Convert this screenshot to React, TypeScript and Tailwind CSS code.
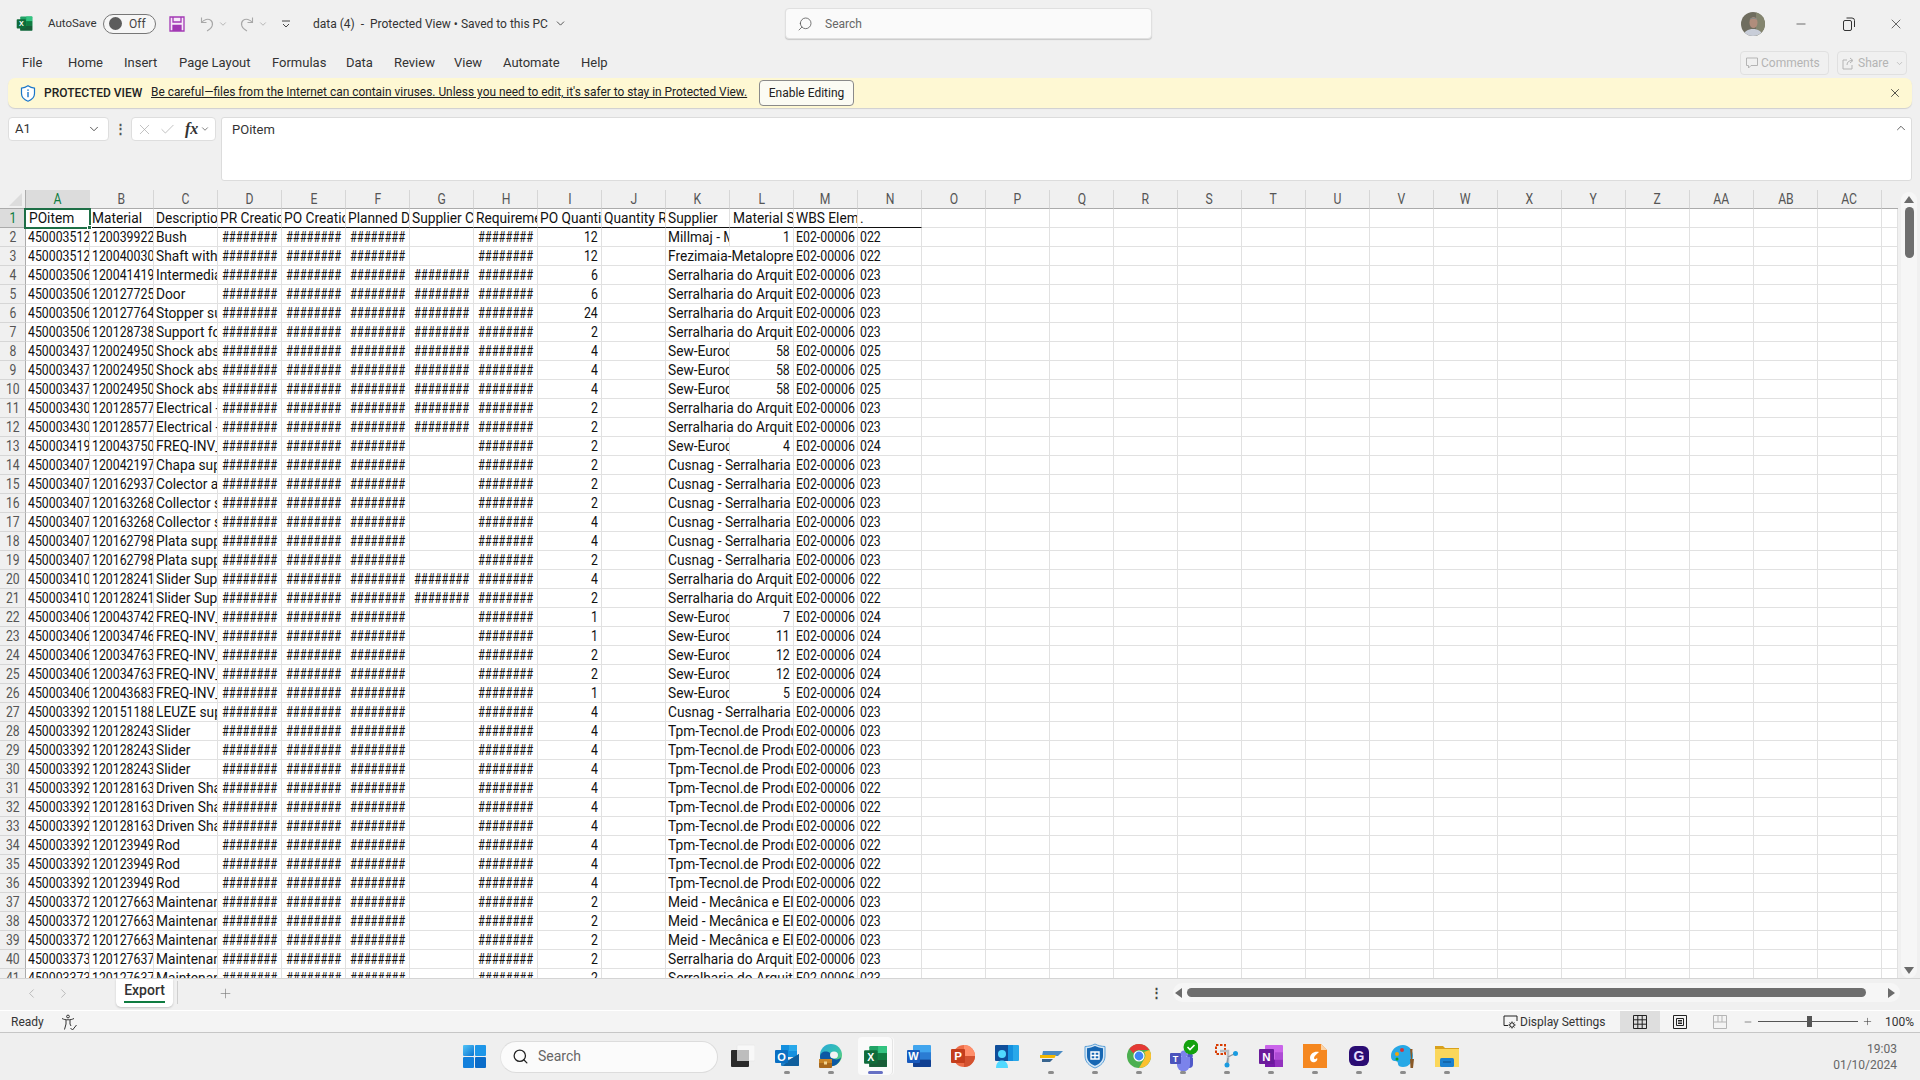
import React from 'react';
import { ChevronDown, ChevronUp, ChevronLeft, ChevronRight, Minus, Plus, Search, X, Check } from 'lucide-react';

const uiFont = "font-['Roboto','Noto_Sans',sans-serif]";
const cellFont = "font-['Roboto',sans-serif]";

const COLUMNS = ['A', 'B', 'C', 'D', 'E', 'F', 'G', 'H', 'I', 'J', 'K', 'L', 'M', 'N', 'O', 'P', 'Q', 'R', 'S', 'T', 'U', 'V', 'W', 'X', 'Y', 'Z', 'AA', 'AB', 'AC'];

const TABS = [
    { label: 'File', width: 'w-[46px]' },
    { label: 'Home', width: 'w-[56px]' },
    { label: 'Insert', width: 'w-[55px]' },
    { label: 'Page Layout', width: 'w-[93px]' },
    { label: 'Formulas', width: 'w-[74px]' },
    { label: 'Data', width: 'w-[48px]' },
    { label: 'Review', width: 'w-[60px]' },
    { label: 'View', width: 'w-[49px]' },
    { label: 'Automate', width: 'w-[78px]' },
    { label: 'Help', width: 'w-[40px]' },
];

const HEADERS = ['POitem', 'Material', 'Description', 'PR Creation Date', 'PO Creation Date', 'Planned Date', 'Supplier Conf', 'Requirement', 'PO Quantity', 'Quantity Rec', 'Supplier', 'Material Sup', 'WBS Element', '.'];

const SERRA = 'Serralharia do Arquitecto';
const SEW = 'Sew-Eurodrive';
const CUSNAG = 'Cusnag - Serralharia Civil';
const TPM = 'Tpm-Tecnol.de Produção';
const MEID = 'Meid - Mecânica e Eletricidade';

type Row = [string, string, string, boolean, number, string, number | null, string];

const ROWS: Row[] = [
    ['4500035120', '1200399220', 'Bush', false, 12, 'Millmaj - Mecânica', 1, '022'],
    ['4500035120', '1200400300', 'Shaft with  bushing', false, 12, 'Frezimaia-Metalopress', null, '022'],
    ['4500035060', '1200414190', 'Intermediate', true, 6, SERRA, null, '023'],
    ['4500035060', '1201277250', 'Door', true, 6, SERRA, null, '023'],
    ['4500035060', '1201277640', 'Stopper support', true, 24, SERRA, null, '023'],
    ['4500035060', '1201287380', 'Support for', true, 2, SERRA, null, '023'],
    ['4500034370', '1200249500', 'Shock absorber', true, 4, SEW, 58, '025'],
    ['4500034370', '1200249500', 'Shock absorber', true, 4, SEW, 58, '025'],
    ['4500034370', '1200249500', 'Shock absorber', true, 4, SEW, 58, '025'],
    ['4500034300', '1201285770', 'Electrical -cable', true, 2, SERRA, null, '023'],
    ['4500034300', '1201285770', 'Electrical -cable', true, 2, SERRA, null, '023'],
    ['4500034190', '1200437500', 'FREQ-INV_ABB', false, 2, SEW, 4, '024'],
    ['4500034070', '1200421970', 'Chapa suporte', false, 2, CUSNAG, null, '023'],
    ['4500034070', '1201629370', 'Colector ar', false, 2, CUSNAG, null, '023'],
    ['4500034070', '1201632680', 'Collector sup', false, 2, CUSNAG, null, '023'],
    ['4500034070', '1201632680', 'Collector sup', false, 4, CUSNAG, null, '023'],
    ['4500034070', '1201627980', 'Plata support', false, 4, CUSNAG, null, '023'],
    ['4500034070', '1201627980', 'Plata support', false, 2, CUSNAG, null, '023'],
    ['4500034100', '1201282410', 'Slider Support', true, 4, SERRA, null, '022'],
    ['4500034100', '1201282410', 'Slider Support', true, 2, SERRA, null, '022'],
    ['4500034060', '1200437420', 'FREQ-INV_ABB', false, 1, SEW, 7, '024'],
    ['4500034060', '1200347460', 'FREQ-INV_ABB', false, 1, SEW, 11, '024'],
    ['4500034060', '1200347630', 'FREQ-INV_ABB', false, 2, SEW, 12, '024'],
    ['4500034060', '1200347630', 'FREQ-INV_ABB', false, 2, SEW, 12, '024'],
    ['4500034060', '1200436830', 'FREQ-INV_ABB', false, 1, SEW, 5, '024'],
    ['4500033920', '1201511880', 'LEUZE support', false, 4, CUSNAG, null, '023'],
    ['4500033920', '1201282430', 'Slider', false, 4, TPM, null, '023'],
    ['4500033920', '1201282430', 'Slider', false, 4, TPM, null, '023'],
    ['4500033920', '1201282430', 'Slider', false, 4, TPM, null, '023'],
    ['4500033920', '1201281630', 'Driven Shaft', false, 4, TPM, null, '022'],
    ['4500033920', '1201281630', 'Driven Shaft', false, 4, TPM, null, '022'],
    ['4500033920', '1201281630', 'Driven Shaft', false, 4, TPM, null, '022'],
    ['4500033920', '1201239490', 'Rod', false, 4, TPM, null, '022'],
    ['4500033920', '1201239490', 'Rod', false, 4, TPM, null, '022'],
    ['4500033920', '1201239490', 'Rod', false, 4, TPM, null, '022'],
    ['4500033720', '1201276630', 'Maintenance', false, 2, MEID, null, '023'],
    ['4500033720', '1201276630', 'Maintenance', false, 2, MEID, null, '023'],
    ['4500033720', '1201276630', 'Maintenance', false, 2, MEID, null, '023'],
    ['4500033730', '1201276370', 'Maintenance', false, 2, SERRA, null, '023'],
    ['4500033730', '1201276370', 'Maintenance', false, 2, SERRA, null, '023'],
];

const HASH = '########';
const cellBorder = 'border-r border-b border-[#e1e1e1] p-0';
const cellInner = 'h-[18px] leading-[18px] overflow-hidden whitespace-nowrap text-[14px] text-[#111]';
// Roboto squeezed to the width of the sheet's narrow font: digits a bit more than letters
const wordLeft = 'inline-block origin-left scale-x-[0.98]';
const digitLeft = 'inline-block origin-left scale-x-[0.88]';
const digitRight = 'inline-block origin-right scale-x-[0.88]';
const narrowCenter = 'inline-block origin-center scale-x-[0.87]';
const hashCenter = 'inline-block origin-center scale-x-[0.8] shrink-0';

const TextCell = ({ value, colSpan, digits }: { value?: string; colSpan?: number; digits?: boolean }) => (
    <td colSpan={colSpan} className={cellBorder}>
        <div className={`${cellInner} pl-[2px]`}>
            <span className={digits ? digitLeft : wordLeft}>{value}</span>
        </div>
    </td>
);

const HashCell = ({ show = true }: { show?: boolean }) => (
    <td className={cellBorder}>
        <div className={`${cellInner} flex justify-center`}>
            {show && <span className={hashCenter}>{HASH}</span>}
        </div>
    </td>
);

const NumCell = ({ value }: { value: number }) => (
    <td className={cellBorder}>
        <div className={`${cellInner} text-right pr-[3px]`}>
            <span className={digitRight}>{value}</span>
        </div>
    </td>
);

const ExcelMark = ({ size }: { size: number }) => (
    <svg width={size} height={size} viewBox="0 0 24 24">
        <rect x="6" y="2" width="17" height="20" rx="1.2" fill="#21a366" />
        <rect x="14.5" y="2" width="8.5" height="6.7" fill="#33c481" />
        <rect x="14.5" y="8.7" width="8.5" height="6.6" fill="#107c41" />
        <rect x="6" y="15.3" width="17" height="6.7" fill="#185c37" />
        <rect x="6" y="8.7" width="8.5" height="6.6" fill="#107c41" />
        <rect x="1" y="6" width="13" height="13" rx="1" fill="#0f6b3a" />
        <text x="7.5" y="16" textAnchor="middle" fontSize="10" fontWeight="700" fill="#fff" fontFamily="Liberation Sans, sans-serif">X</text>
    </svg>
);

const SaveIcon = () => (
    <svg width="16" height="16" viewBox="0 0 16 16" fill="none" stroke="#a238b4" strokeWidth="1.3">
        <path d="M1 1h14v14H1z" fill="#f6e9f8" />
        <path d="M4 1v5h8V1" />
        <path d="M4 15V9.5h8V15" fill="#a238b4" stroke="none" />
        <path d="M4 15V9.5h8V15" />
    </svg>
);

const UndoIcon = ({ flip }: { flip?: boolean }) => (
    <svg width="16" height="16" viewBox="0 0 16 16" fill="none" stroke="#a8a8a8" strokeWidth="1.1" className={flip ? '-scale-x-100' : ''}>
        <path d="M2.5 1.5v5h5" />
        <path d="M2.5 6.5C5 3.5 9 2 12 4.500c3 3 1.500 8-4 10.500" />
    </svg>
);

const RestoreIcon = () => (
    <svg width="12" height="14" viewBox="0 0 12 14" fill="none" stroke="#333" strokeWidth="1">
        <rect x=".5" y="3.500" width="8" height="10" rx="1.500" />
        <path d="M3.500 1h5.500a2.500 2.500 0 0 1 2.500 2.500v6.500" />
    </svg>
);

const ShieldIcon = () => (
    <svg width="16" height="17" viewBox="0 0 16 17" fill="none">
        <path d="M8 .8c2 1.400 4 2.200 6.500 2.400v5.300c0 3.500-2.700 6.300-6.500 7.700-3.800-1.400-6.500-4.200-6.500-7.700V3.200C4 3 6 2.200 8 .8z" fill="#fff" stroke="#1a76c9" strokeWidth="1.2" />
        <rect x="7.300" y="7" width="1.400" height="5.200" fill="#1a76c9" />
        <rect x="7.300" y="4.400" width="1.400" height="1.500" fill="#1a76c9" />
    </svg>
);

const Avatar = () => (
    <svg width="24" height="24" viewBox="0 0 24 24">
        <defs>
            <clipPath id="avatar-clip">
                <circle cx="12" cy="12" r="12" />
            </clipPath>
        </defs>
        <g clipPath="url(#avatar-clip)">
            <rect width="24" height="24" fill="#6f6d5f" />
            <rect x="15" width="9" height="24" fill="#84856f" />
            <path d="M3 24c0-5 4-7 9-7s9 2 9 7z" fill="#c8cdd8" />
            <ellipse cx="12.500" cy="10.500" rx="4" ry="5.500" fill="#b08d7c" />
            <path d="M8.500 8c1-3.500 7-3.500 8 0-2-1.200-6-1.200-8 0z" fill="#8a8a86" />
        </g>
    </svg>
);

const DisplayIcon = () => (
    <svg width="15" height="14" viewBox="0 0 15 14" fill="none" stroke="#222" strokeWidth="1">
        <path d="M5 10.500H1V1h13v5" />
        <circle cx="9" cy="10" r="2.200" />
        <path d="M9 6.500v1.300M9 12.200v1.300M5.500 10h1.300M11.200 10h1.300M6.600 7.600l.9.9M10.500 11.500l.9.9M11.400 7.600l-.9.9M7.500 11.500l-.9.9" />
    </svg>
);

const AccessIcon = () => (
    <svg width="17" height="17" viewBox="0 0 17 17" fill="none" stroke="#333" strokeWidth="1">
        <circle cx="7" cy="2.500" r="1.400" />
        <path d="M1 4.500c2 1 3.500 1.300 6 1.300s4-.3 6-1.300" />
        <path d="M5 6v4l-1.500 5.500M9 6v4l1 2" />
        <path d="M9.500 14l2 2 4-5" stroke="#333" />
    </svg>
);

const NormalViewIcon = () => (
    <svg width="14" height="14" viewBox="0 0 14 14" fill="none" stroke="#222" strokeWidth="1">
        <path d="M.5.500h13v13H.5zM.5 4.800h13M.5 9.200h13M4.800.500v13M9.200.500v13" />
    </svg>
);

const PageViewIcon = () => (
    <svg width="14" height="14" viewBox="0 0 14 14" fill="none" stroke="#222" strokeWidth="1">
        <path d="M.5.500h13v13H.5zM3.500 3.500h7v7h-7zM5 5.500h4M5 7h4M5 8.500h4" />
    </svg>
);

const BreakViewIcon = () => (
    <svg width="14" height="14" viewBox="0 0 14 14" fill="none" stroke="#b5b5b5" strokeWidth="1">
        <path d="M.5.500h13v13H.5zM.5 7h13M5 .500V7M9 .500V7" />
    </svg>
);

const WindowsLogo = () => (
    <svg width="23" height="23" viewBox="0 0 23 23">
        <defs>
            <linearGradient id="win-a" x1="0" y1="0" x2="1" y2="1">
                <stop offset="0" stopColor="#52c5f8" />
                <stop offset="1" stopColor="#0b74d1" />
            </linearGradient>
        </defs>
        <rect x="0" y="0" width="11" height="11" rx="1" fill="url(#win-a)" />
        <rect x="12" y="0" width="11" height="11" rx="1" fill="#1e96e8" />
        <rect x="0" y="12" width="11" height="11" rx="1" fill="#1380dc" />
        <rect x="12" y="12" width="11" height="11" rx="1" fill="#0a6cc9" />
    </svg>
);

const OfficeTile = ({ letter, tile, parts }: { letter: string; tile: string; parts: string[] }) => (
    <svg width="24" height="24" viewBox="0 0 24 24">
        <rect x="6" y="1" width="18" height="22" rx="1" fill={parts[0]} />
        <rect x="6" y="8.300" width="18" height="7.300" fill={parts[1]} />
        <rect x="6" y="15.600" width="18" height="7.400" rx="1" fill={parts[2]} />
        <rect x="0" y="6" width="13" height="13" rx="1" fill={tile} />
        <text x="6.500" y="16.200" textAnchor="middle" fontSize="11" fontWeight="700" fill="#fff" fontFamily="Liberation Sans, sans-serif">{letter}</text>
    </svg>
);

const TaskView = () => (
    <svg width="24" height="24" viewBox="0 0 24 24">
        <rect x="6" y="1" width="18" height="16" rx="1" fill="#f8f8f8" stroke="#e2e2e2" strokeWidth=".5" />
        <rect x="0" y="6" width="18" height="17" rx="1" fill="#2a2a2a" />
        <rect x="6" y="6" width="12" height="11" fill="#bdbdbd" />
    </svg>
);

const Outlook = () => (
    <svg width="24" height="24" viewBox="0 0 24 24">
        <rect x="6" y="1" width="16" height="12" fill="#1490df" />
        <rect x="14" y="1" width="8" height="6" fill="#28a8ea" />
        <path d="M6 11l8 5 10-6v11a1 1 0 0 1-1 1H7a1 1 0 0 1-1-1z" fill="#1b7dc7" />
        <path d="M14 16l10-6v11a1 1 0 0 1-1 1H8z" fill="#0f5e9c" />
        <rect x="0" y="6" width="13" height="13" rx="1" fill="#0a6fc2" />
        <text x="6.500" y="16.500" textAnchor="middle" fontSize="11" fontWeight="700" fill="#fff" fontFamily="Liberation Sans, sans-serif">O</text>
    </svg>
);

const EdgeWork = () => (
    <svg width="24" height="24" viewBox="0 0 24 24">
        <defs>
            <linearGradient id="edge-a" x1="0" y1="0" x2="1" y2="1">
                <stop offset="0" stopColor="#2aa8d8" />
                <stop offset=".55" stopColor="#35c1b0" />
                <stop offset="1" stopColor="#7bd65a" />
            </linearGradient>
        </defs>
        <circle cx="12" cy="11" r="11" fill="url(#edge-a)" />
        <path d="M1 13C1 8 7 6 11 9c3 2 1 5 4 6 3 1 6 0 7-2-1 6-6 10-11 9-6-1-10-4-10-9z" fill="#0c59a4" />
        <ellipse cx="15" cy="11" rx="4" ry="3.500" fill="#f3f3f3" />
        <rect x="0" y="15" width="13" height="9" rx="1" fill="#a8681c" />
        <rect x="0" y="15" width="13" height="4" fill="#c98528" />
        <rect x="5" y="17.500" width="3" height="3" fill="#f4d58f" />
    </svg>
);

const Powerpoint = () => (
    <svg width="24" height="24" viewBox="0 0 24 24">
        <circle cx="13" cy="12" r="11" fill="#ed6c47" />
        <path d="M13 1a11 11 0 0 1 11 11H13z" fill="#ff8f6b" />
        <path d="M13 12h11a11 11 0 0 1-11 11z" fill="#d35230" />
        <rect x="0" y="5" width="14" height="14" rx="1" fill="#c43e1c" />
        <text x="7" y="16.200" textAnchor="middle" fontSize="11.500" fontWeight="700" fill="#fff" fontFamily="Liberation Sans, sans-serif">P</text>
    </svg>
);

const People = () => (
    <svg width="24" height="24" viewBox="0 0 24 24">
        <rect x="0" y="1" width="16" height="16" rx="1" fill="#0f4e9a" />
        <rect x="13" y="1" width="11" height="16" rx="1" fill="#28a8ea" />
        <rect x="13" y="1" width="5" height="16" fill="#1490df" />
        <circle cx="7" cy="10" r="4" fill="#50d9ff" />
        <path d="M1 24c0-5 2.500-7.500 6-7.500s6 2.500 6 7.500z" fill="#50d9ff" />
    </svg>
);

const Wedge = () => (
    <svg width="24" height="24" viewBox="0 0 24 24">
        <path d="M4 7h20l-5 5H3z" fill="#4b8bc4" />
        <path d="M1 11h16l-1.500 3H1z" fill="#f5b800" />
        <path d="M3 15h11l-3 3H3z" fill="#38658f" />
    </svg>
);

const ShieldApp = () => (
    <svg width="24" height="26" viewBox="0 0 24 26">
        <path d="M12 1c3 1.600 6.500 2.400 10 2.500V13c0 6-4.500 10-10 12C6.500 23 2 19 2 13V3.500C5.500 3.400 9 2.600 12 1z" fill="#d4e6f5" stroke="#5aa0d8" strokeWidth="1" />
        <path d="M12 3c2.500 1.300 5.500 2 8 2.200V13c0 4.800-3.600 8-8 9.800C7.600 21 4 17.800 4 13V5.200C6.500 5 9.500 4.300 12 3z" fill="#1767b3" />
        <path d="M8 9h8v7H8zM8 12.500h8M12 9v7" fill="none" stroke="#fff" strokeWidth="1.400" />
    </svg>
);

const Chrome = () => (
    <svg width="24" height="24" viewBox="0 0 24 24">
        <circle cx="12" cy="12" r="12" fill="#4caf50" />
        <path d="M12 0a12 12 0 0 1 10.400 6H12a6 6 0 0 0-5.500 3.600L2.400 4.800A12 12 0 0 1 12 0z" fill="#e53935" />
        <path d="M22.400 6A12 12 0 0 1 12 24l5.200-9A6 6 0 0 0 17 8z" fill="#fbc02d" />
        <circle cx="12" cy="12" r="5.600" fill="#fff" />
        <circle cx="12" cy="12" r="4.400" fill="#3f86f5" />
    </svg>
);

const Teams = () => (
    <svg width="30" height="32" viewBox="0 0 30 32">
        <circle cx="16" cy="14" r="3.500" fill="#7b83eb" />
        <circle cx="22" cy="16" r="2.800" fill="#5059c9" />
        <path d="M17 18h8v6a4 4 0 0 1-8 0z" fill="#5059c9" />
        <path d="M9 17h13v8a6 6 0 0 1-13 0z" fill="#7b83eb" />
        <rect x="2" y="13" width="11" height="11" rx="1" fill="#4b53bc" />
        <text x="7.500" y="22" textAnchor="middle" fontSize="9" fontWeight="700" fill="#fff" fontFamily="Liberation Sans, sans-serif">T</text>
        <circle cx="23" cy="7" r="7.500" fill="#13a10e" />
        <path d="M19.500 7l2.500 2.500 4.500-4.500" fill="none" stroke="#fff" strokeWidth="1.600" />
    </svg>
);

const Snip = () => (
    <svg width="24" height="24" viewBox="0 0 24 24">
        <rect x="1" y="1" width="9" height="9" fill="none" stroke="#d83b01" strokeWidth="2" strokeDasharray="2.500 1.500" />
        <path d="M5 7h8v12" fill="none" stroke="#b8bdc3" strokeWidth="2.500" />
        <path d="M13 13l6-3M13 14l-1 5" stroke="#8f969c" strokeWidth="1.300" />
        <circle cx="20.500" cy="9.500" r="2.500" fill="#1a9be0" />
        <circle cx="12" cy="21" r="2.500" fill="#1a9be0" />
    </svg>
);

const OneNote = () => (
    <svg width="24" height="24" viewBox="0 0 24 24">
        <rect x="6" y="1" width="18" height="22" rx="1" fill="#ca64ea" />
        <rect x="16" y="8.300" width="8" height="7.300" fill="#ae4bd5" />
        <rect x="16" y="15.600" width="8" height="7.400" fill="#9332bf" />
        <rect x="6" y="15.600" width="10" height="7.400" fill="#7719aa" />
        <rect x="0" y="5" width="15" height="15" rx="1" fill="#6a1b9a" />
        <text x="7.500" y="16.800" textAnchor="middle" fontSize="11.500" fontWeight="700" fill="#fff" fontFamily="Liberation Sans, sans-serif">N</text>
    </svg>
);

const Foxit = () => (
    <svg width="24" height="24" viewBox="0 0 24 24">
        <path d="M0 0h18l6 6v18H0z" fill="#f5871f" />
        <path d="M18 0l6 6h-6z" fill="#fbd2a6" />
        <path d="M16 8c-5-1-9 2-9 6s3 5 5 4c2-.8 3-3 2-4-1 1.500-3 1.500-3 0 0-2 3-4 5-6z" fill="#fff" />
    </svg>
);

const GApp = () => (
    <svg width="22" height="24" viewBox="0 0 22 24">
        <rect x="1" y="2" width="20" height="20" rx="6" fill="#2a0c73" />
        <text x="11" y="17" textAnchor="middle" fontSize="14" fontWeight="700" fill="#e6dcff" fontFamily="Liberation Sans, sans-serif">G</text>
    </svg>
);

const Paint = () => (
    <svg width="24" height="24" viewBox="0 0 24 24">
        <path d="M12 1C5 1 0 6 0 12c0 4 2 5 4 5s3 1 3 3 2 3 5 3c6 0 10-5 10-11S18 1 12 1z" fill="#27a8e6" />
        <circle cx="6" cy="10" r="2" fill="#f0a30a" />
        <circle cx="11" cy="6" r="2" fill="#d13438" />
        <circle cx="6" cy="15" r="1.500" fill="#13a10e" />
        <path d="M19 5l2.500 0-.5 10h2l-1 9h-2.500l-.5-9h1z" fill="#8a5a28" />
    </svg>
);

const FolderIcon = () => (
    <svg width="24" height="24" viewBox="0 0 24 24">
        <path d="M0 2h8l2 2h14v3H0z" fill="#d9a11c" />
        <rect x="0" y="5" width="24" height="18" fill="#fbd75b" />
        <rect x="5" y="14" width="14" height="9" rx="1.500" fill="#1a80d0" />
        <path d="M8 18h8" stroke="#0b4f8a" strokeWidth="1" />
    </svg>
);

const TASKBAR = [
    { id: 'taskview', icon: <TaskView />, dot: false },
    { id: 'outlook', icon: <Outlook />, dot: true },
    { id: 'edge', icon: <EdgeWork />, dot: true },
    { id: 'excel', icon: <ExcelMark size={25} />, dot: false, active: true },
    { id: 'word', icon: <OfficeTile letter="W" tile="#185abd" parts={['#41a5ee', '#2b7cd3', '#103f91']} />, dot: false },
    { id: 'ppt', icon: <Powerpoint />, dot: false },
    { id: 'people', icon: <People />, dot: false },
    { id: 'wedge', icon: <Wedge />, dot: true },
    { id: 'shield', icon: <ShieldApp />, dot: true },
    { id: 'chrome', icon: <Chrome />, dot: true },
    { id: 'teams', icon: <Teams />, dot: true },
    { id: 'snip', icon: <Snip />, dot: true },
    { id: 'onenote', icon: <OneNote />, dot: true },
    { id: 'foxit', icon: <Foxit />, dot: true },
    { id: 'gapp', icon: <GApp />, dot: true },
    { id: 'paint', icon: <Paint />, dot: true },
    { id: 'folder', icon: <FolderIcon />, dot: true },
];

const TitleBar = () => (
    <div className="h-[47px] flex items-center text-[12px] text-[#333] relative shrink-0">
        <div className="ml-[16px]"><ExcelMark size={17} /></div>
        <span className="ml-[15px] w-[55px] text-[11.500px]">AutoSave</span>
        <div className="h-[20px] w-[53px] rounded-full border border-[#777] flex items-center pl-[5px] gap-[7px] bg-[#f6f6f6]">
            <div className="h-[13px] w-[13px] rounded-full bg-[#5c5c5c]" />
            <span className="text-[12px] text-[#444]">Off</span>
        </div>
        <div className="ml-[13px]"><SaveIcon /></div>
        <div className="ml-[14px]"><UndoIcon /></div>
        <ChevronDown size={10} className="ml-[3px] text-[#aaa]" />
        <div className="ml-[11px]"><UndoIcon flip /></div>
        <ChevronDown size={10} className="ml-[3px] text-[#aaa]" />
        <svg width="10" height="10" viewBox="0 0 10 10" fill="none" stroke="#444" strokeWidth="1" className="ml-[13px]">
            <path d="M1 2h8M2 5l3 3 3-3" />
        </svg>
        <span className="ml-[22px] whitespace-pre w-[241px]">data (4)  -  Protected View • Saved to this PC</span>
        <ChevronDown size={13} strokeWidth={1.5} />
        <div className="ml-[218px] w-[367px] h-[31px] rounded-[4px] bg-[#fafafa] border border-[#e0e0e0] shadow-[0_1px_1px_#c8c8c8] flex items-center pl-[11px]">
            <Search size={16} strokeWidth={1.2} className="-scale-x-100 text-[#555]" />
            <span className="ml-[12px] text-[#666]">Search</span>
        </div>
        <div className="ml-[589px]"><Avatar /></div>
        <Minus size={14} strokeWidth={1.2} className="ml-[29px]" />
        <div className="ml-[35px]"><RestoreIcon /></div>
        <X size={16} strokeWidth={1.1} className="ml-[33px]" />
    </div>
);

const RibbonTabs = () => (
    <div className="h-[31px] flex items-start pl-[22px] text-[13px] text-[#333] shrink-0">
        <div className="h-[31px] flex items-center">
            {TABS.map((tab) => (
                <span key={tab.label} className={tab.width}>{tab.label}</span>
            ))}
        </div>
        <div className="ml-auto mr-[13px] mt-[4px] flex gap-[8px] text-[12px] text-[#b4b4b4]">
            <div className="h-[24px] w-[89px] rounded-[4px] border border-[#e0e0e0] flex items-center pl-[5px] gap-[3px]">
                <svg width="12" height="12" viewBox="0 0 12 12" fill="none" stroke="#b4b4b4"><path d="M.5 1h11v7.500H5L2.500 11V8.500h-2z" /></svg>
                Comments
            </div>
            <div className="h-[24px] w-[70px] rounded-[4px] border border-[#e0e0e0] flex items-center pl-[4px] gap-[3px]">
                <svg width="13" height="13" viewBox="0 0 13 13" fill="none" stroke="#b4b4b4"><path d="M5 3H1v9h9V8M5 8c0-3 2-4.500 5-4.500M8 1l3 2.500L8 6" /></svg>
                Share
                <ChevronDown size={9} className="ml-[3px]" />
            </div>
        </div>
    </div>
);

const Banner = () => (
    <div className="mx-[8px] h-[30px] rounded-[7px] bg-[#fef8d3] shadow-[0_1px_1px_#cfcfcf] flex items-center pl-[12px] text-[12px] text-[#222] shrink-0">
        <ShieldIcon />
        <span className="ml-[8px] w-[107px] font-medium">PROTECTED VIEW</span>
        <span className="underline w-[608px] whitespace-nowrap text-[11.900px]">Be careful—files from the Internet can contain viruses. Unless you need to edit, it's safer to stay in Protected View.</span>
        <button className="h-[26px] w-[95px] rounded-[4px] border border-[#8a8a8a] bg-[#fbfbf3] text-[12px] text-[#222]">Enable Editing</button>
        <X size={14} strokeWidth={1.3} className="ml-auto mr-[10px]" />
    </div>
);

const FormulaBar = () => (
    <div className="mt-[9px] mx-[8px] h-[64px] flex items-start text-[13px] text-[#333] shrink-0">
        <div className="h-[24px] w-[101px] rounded-[4px] bg-white border border-[#dedede] flex items-center pl-[6px]">
            A1
            <ChevronDown size={14} strokeWidth={1.4} className="ml-auto mr-[7px]" />
        </div>
        <div className="w-[22px] h-[24px] flex items-center justify-center text-[13px] font-bold text-[#555]">⋮</div>
        <div className="h-[24px] w-[85px] rounded-[4px] bg-white border border-[#dedede] flex items-center pl-[4px] text-[#a8a8a8]">
            <X size={17} strokeWidth={1} />
            <Check size={17} strokeWidth={1} className="ml-[6px]" />
            <span className="ml-[9px] font-['Liberation_Serif',serif] italic font-bold text-[16px] text-[#333]">fx</span>
            <ChevronDown size={10} className="ml-[2px] text-[#666]" />
        </div>
        <div className="ml-[5px] flex-1 h-[64px] rounded-[3px] bg-white border border-[#dcdcdc] pl-[10px] pt-[2px] relative">
            POitem
            <ChevronUp size={14} strokeWidth={1.3} className="absolute right-[3px] top-[3px]" />
        </div>
    </div>
);

const SheetGrid = () => (
    <div className="mt-[9px] h-[788px] relative flex overflow-hidden shrink-0">
        <div className="w-[1898px] h-[788px] overflow-hidden relative shrink-0">
            <table className={`${cellFont} table-fixed border-separate border-spacing-0 w-[1898px] bg-white`}>
                <colgroup>
                    <col className="w-[26px]" />
                    {COLUMNS.map((col) => (
                        <col key={col} className="w-[64px]" />
                    ))}
                    <col className="w-[16px]" />
                </colgroup>
                <thead>
                    <tr>
                        <th className="h-[19px] bg-[#f0f0f0] border-b border-[#ababab] border-r p-0 relative">
                            <div className="ml-[9px] w-0 h-0 border-l-[13px] border-l-transparent border-b-[13px] border-b-[#dcdcdc]" />
                        </th>
                        {COLUMNS.map((col) => (
                            <th
                                key={col}
                                className={`h-[19px] p-0 leading-[18px] font-normal text-[14px] border-b border-[#ababab] ${
                                    col === 'A'
                                        ? 'bg-[#dcdcdc] text-[#107c41] border-r-[#dcdcdc] border-r'
                                        : 'bg-[#f0f0f0] text-[#555] border-r border-r-[#d6d6d6]'
                                }`}
                            >
                                <span className={narrowCenter}>{col}</span>
                            </th>
                        ))}
                        <th className="h-[19px] p-0 bg-[#f0f0f0] border-b border-[#ababab]" />
                    </tr>
                </thead>
                <tbody>
                    <tr>
                        <td className="h-[19px] p-0 leading-[18px] text-center text-[14px] text-[#107c41] bg-[#dcdcdc] border-r border-b border-[#ababab]">
                            <span className={narrowCenter}>1</span>
                        </td>
                        {COLUMNS.map((col, i) => (
                            <td key={col} className={`p-0 border-r border-[#e1e1e1] border-b ${i < 14 ? 'border-b-[#111]' : ''}`}>
                                <div className={`${cellInner} ${i === 0 || i === 11 ? 'pl-[3px]' : 'pl-[2px]'}`}>
                                    <span className={wordLeft}>{HEADERS[i]}</span>
                                </div>
                            </td>
                        ))}
                        <td className={cellBorder} />
                    </tr>
                    {ROWS.map((row, r) => (
                        <tr key={r}>
                            <td className="h-[19px] p-0 leading-[18px] text-center text-[14px] text-[#555] bg-[#f0f0f0] border-r border-b border-[#d6d6d6] border-r-[#ababab]">
                                <span className={narrowCenter}>{r + 2}</span>
                            </td>
                            <TextCell value={row[0]} digits />
                            <TextCell value={row[1]} digits />
                            <TextCell value={row[2]} />
                            <HashCell />
                            <HashCell />
                            <HashCell />
                            <HashCell show={row[3]} />
                            <HashCell />
                            <NumCell value={row[4]} />
                            <TextCell />
                            {row[6] === null ? (
                                <TextCell value={row[5]} colSpan={2} />
                            ) : (
                                <>
                                    <TextCell value={row[5]} />
                                    <NumCell value={row[6]} />
                                </>
                            )}
                            <TextCell value="E02-00006" digits />
                            <TextCell value={row[7]} digits />
                            {COLUMNS.slice(14).map((col) => (
                                <td key={col} className={cellBorder} />
                            ))}
                            <td className={cellBorder} />
                        </tr>
                    ))}
                </tbody>
            </table>
            <div className="absolute left-[24px] top-[18px] w-[67px] h-[21px] border-2 border-[#1e6f46] pointer-events-none">
                <div className="absolute -right-[3px] -bottom-[3px] w-[5px] h-[5px] bg-[#1e6f46] border border-white" />
            </div>
        </div>
        <div className="flex-1 flex flex-col items-center pt-[2px] bg-[#f0f0f0]">
            <div className="w-[16px] h-[786px] rounded-full bg-[#f6f6f6] flex flex-col items-center">
                <div className="w-0 h-0 mt-[4px] border-x-[5px] border-x-transparent border-b-[7px] border-b-[#6b6b6b]" />
                <div className="mt-[4px] w-[9px] h-[51px] rounded-full bg-[#6e6e6e]" />
                <div className="mt-auto mb-[4px] w-0 h-0 border-x-[5px] border-x-transparent border-t-[7px] border-t-[#6b6b6b]" />
            </div>
        </div>
    </div>
);

const SheetTabs = () => (
    <div className="h-[32px] flex items-start border-t border-[#d4d4d4] shrink-0 text-[#333]">
        <ChevronLeft size={15} strokeWidth={1.2} className="ml-[24px] mt-[7px] text-[#a8a8a8]" />
        <ChevronRight size={15} strokeWidth={1.2} className="ml-[17px] mt-[7px] text-[#a8a8a8]" />
        <div className="ml-[45px] w-[57px] h-[28px] bg-white rounded-b-[5px] shadow-[0_1px_2px_#c4c4c4] flex flex-col items-center">
            <span className="text-[14px] font-medium h-[22px] leading-[22px] text-[#333]">Export</span>
            <div className="w-[41px] h-[2px] bg-[#107c41]" />
        </div>
        <div className="ml-[4px] mt-[2px] w-px h-[23px] bg-[#cfcfcf]" />
        <Plus size={15} strokeWidth={1} className="ml-[40px] mt-[7px] text-[#777]" />
        <div className="ml-[917px] mt-[4px] text-[13px] font-bold text-[#444] w-[10px] text-center">⋮</div>
        <div className="ml-[13px] mt-[4px] w-[727px] h-[19px] rounded-full bg-[#f6f6f6] flex items-center">
            <div className="ml-[2px] w-0 h-0 border-y-[5px] border-y-transparent border-r-[7px] border-r-[#6b6b6b]" />
            <div className="ml-[5px] w-[679px] h-[9px] rounded-full bg-[#6e6e6e]" />
            <div className="ml-auto mr-[5px] w-0 h-0 border-y-[5px] border-y-transparent border-l-[7px] border-l-[#6b6b6b]" />
        </div>
    </div>
);

const StatusBar = () => (
    <div className="h-[23px] bg-[#f4f4f4] border-t border-white border-b border-b-[#c6c6c6] flex items-center text-[12px] text-[#333] shrink-0">
        <span className="ml-[11px]">Ready</span>
        <div className="ml-[17px] mt-[1px]"><AccessIcon /></div>
        <div className="ml-auto flex items-center h-full">
            <DisplayIcon />
            <span className="ml-[2px] w-[100px]">Display Settings</span>
            <div className="w-[40px] h-full bg-[#dedede] flex items-center justify-center"><NormalViewIcon /></div>
            <div className="w-[40px] flex justify-center"><PageViewIcon /></div>
            <div className="w-[40px] flex justify-center"><BreakViewIcon /></div>
            <Minus size={10} strokeWidth={1.3} className="ml-[3px]" />
            <div className="ml-[5px] w-[100px] h-px bg-[#555] relative">
                <div className="absolute left-[49px] -top-[5px] w-[5px] h-[11px] bg-[#555]" />
            </div>
            <Plus size={11} strokeWidth={1.2} className="ml-[4px]" />
            <span className="ml-[12px] w-[35px]">100%</span>
        </div>
    </div>
);

const Taskbar = () => (
    <div className="h-[47px] shrink-0 bg-[#efefef] flex items-center relative">
        <div className="ml-[463px]"><WindowsLogo /></div>
        <div className="ml-[14px] w-[218px] h-[32px] rounded-full bg-[#fbfbfb] border border-[#dcdcdc] border-l-[#e4e4e4] flex items-center pl-[11px] text-[#666] text-[14px]">
            <Search size={17} strokeWidth={1.8} className="text-[#222]" />
            <span className="ml-[9px]">Search</span>
        </div>
        <div className="ml-[3px] h-full flex">
            {TASKBAR.map((item) => (
                <div key={item.id} className="w-[44px] h-full relative flex items-center justify-center">
                    {item.active && <div className="absolute left-[5px] top-[4px] w-[34px] h-[38px] rounded-[4px] bg-[#fafafa] shadow-[1px_0_0_#e4e4e4,2px_0_0_#fafafa]" />}
                    <div className="relative -mt-[1px]">{item.icon}</div>
                    {item.dot && <div className="absolute left-[19px] bottom-[6px] w-[6px] h-[3px] rounded-full bg-[#8c8c8c]" />}
                    {item.active && <div className="absolute left-[15px] bottom-[6px] w-[15px] h-[3px] rounded-full bg-[#6670c4]" />}
                </div>
            ))}
        </div>
        <div className="ml-auto mr-[23px] text-right text-[12px] leading-[16px] text-[#666]">
            <div>19:03</div>
            <div>01/10/2024</div>
        </div>
    </div>
);

export default function App() {
    return (
        <div className={`${uiFont} w-[1920px] h-[1080px] bg-[#f0f0f0] flex flex-col overflow-hidden`}>
            <TitleBar />
            <RibbonTabs />
            <Banner />
            <FormulaBar />
            <SheetGrid />
            <SheetTabs />
            <StatusBar />
            <Taskbar />
        </div>
    );
}
